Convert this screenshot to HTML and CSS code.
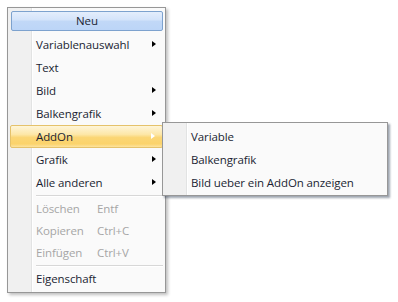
FILE: index.html
```html
<!DOCTYPE html>
<html lang="de">
<head>
    <meta charset="UTF-8">
    <title>Kontextmenü</title>
    <link rel="stylesheet" href="styles.css">
</head>
<body>
    <div class="menu">
        <div class="new-button">Neu</div>
        <div class="item">Variablenauswahl<span class="arrow"></span></div>
        <div class="item">Text</div>
        <div class="item">Bild<span class="arrow"></span></div>
        <div class="item">Balkengrafik<span class="arrow"></span></div>
        <div class="item active">AddOn<span class="arrow"></span></div>
        <div class="item">Grafik<span class="arrow"></span></div>
        <div class="item">Alle anderen<span class="arrow"></span></div>
        <div class="separator"></div>
        <div class="item small disabled"><span class="label">Löschen</span><span class="key">Entf</span></div>
        <div class="item small disabled"><span class="label">Kopieren</span><span class="key">Ctrl+C</span></div>
        <div class="item small disabled"><span class="label">Einfügen</span><span class="key">Ctrl+V</span></div>
        <div class="separator"></div>
        <div class="item small">Eigenschaft</div>

        <!-- submenu of AddOn, opened over the main menu -->
        <div class="submenu">
            <div class="item">Variable</div>
            <div class="item">Balkengrafik</div>
            <div class="item">Bild ueber ein AddOn anzeigen</div>
        </div>
    </div>
</body>
</html>
```

FILE: styles.css
```css
body {
    margin: 0;
    padding: 7px;
    background-color: #fff;
    font-family: "Open Sans", "Noto Sans", sans-serif;
    font-size: 11.5px;
    letter-spacing: -0.1px;
    color: #1b1f33;
}
.menu {
    position: relative;
    width: 152px;
    padding: 3px 2px 2px 3px;
    border: 1px solid #979797;
    background: linear-gradient(to right, #f0f0f0 0, #f0f0f0 23px, #e2e3e3 23px, #e2e3e3 24px, #fff 24px, #fff 25px, #fafafa 25px);
    box-shadow: 2px 2px 3px rgba(0, 0, 0, 0.25);
}
.new-button {
    height: 18px;
    line-height: 18px;
    margin-bottom: 2px;
    text-align: center;
    border: 1px solid #7da2ce;
    border-radius: 2px;
    background: linear-gradient(to bottom, #e4eefc 0%, #d3e3fa 45%, #c1d8f7 50%, #bcd5f7 100%);
}
.item {
    position: relative;
    height: 23px;
    line-height: 23px;
    padding-left: 25px;
    white-space: nowrap;
}
.item.small {
    height: 22px;
    line-height: 22px;
}
.item.active {
    margin-left: -1px;
    height: 21px;
    line-height: 21px;
    border: 1px solid #e5c26b;
    border-radius: 2px;
    padding-left: 25px;
    background: linear-gradient(to bottom, #fef5d9 0%, #fde7a8 40%, #fbd675 55%, #fbd36b 85%, #fde39e 100%);
}
.arrow {
    position: absolute;
    right: 7px;
    top: 8px;
    width: 0;
    height: 0;
    border-top: 3.5px solid transparent;
    border-bottom: 3.5px solid transparent;
    border-left: 4px solid #000;
}
.active .arrow {
    top: 7px;
    border-left-color: #fff;
}
.disabled {
    color: #a6a6a6;
}
.label {
    display: inline-block;
    width: 61px;
}
.separator {
    height: 1px;
    margin: 1px 0 1px 25px;
    border-top: 1px solid #d7d7d7;
    background-color: #fff;
}
.submenu {
    position: absolute;
    left: 154px;
    top: 114px;
    width: 220px;
    padding: 2px 2px 1px 2px;
    border: 1px solid #979797;
    background: linear-gradient(to right, #f0f0f0 0, #f0f0f0 23px, #e2e3e3 23px, #e2e3e3 24px, #fff 24px, #fff 25px, #fafafa 25px);
    box-shadow: 2px 2px 2px rgba(40, 55, 80, 0.45);
}
.submenu .item {
    padding-left: 26px;
}
```
